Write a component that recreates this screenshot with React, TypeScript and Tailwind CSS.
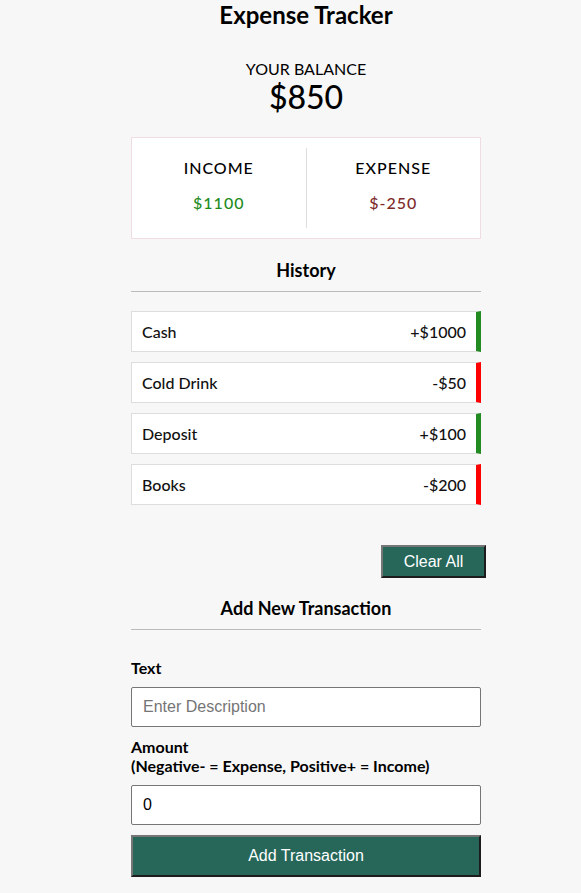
const transactions = [
  { id: 1, text: "Cash", amount: 1000 },
  { id: 2, text: "Cold Drink", amount: -50 },
  { id: 3, text: "Deposit", amount: 100 },
  { id: 4, text: "Books", amount: -200 },
];

function App() {
  const income = 1100;
  const expense = -250;

  return (
    <div className="min-h-[893px] bg-[#f7f7f7] pl-[31px] font-['Lato','Noto_Sans',sans-serif] text-black">
      <div className="w-[350px] mx-auto flex flex-col">
        <h2 className="text-[24px] leading-[30px] font-bold text-center">Expense Tracker</h2>

        {/* balance */}
        <div className="mt-[29px] flex flex-col items-center">
          <h4 className="text-[16px] leading-[19px] uppercase">Your Balance</h4>
          <h1 className="text-[32px] leading-[38px] font-medium">$850</h1>
        </div>

        <div className="mt-[21px] bg-white border border-[#efdde3] py-[10px] flex">
          <div className="flex-1 flex flex-col items-center pt-[10px] pb-[15px] gap-[15px] border-r border-[#dedede]">
            <h4 className="text-[16px] leading-[20px] font-medium tracking-[1px]">INCOME</h4>
            <p className="text-[16px] leading-[20px] font-medium tracking-[1px] text-[#228b22]">${income}</p>
          </div>
          <div className="flex-1 flex flex-col items-center pt-[10px] pb-[15px] gap-[15px]">
            <h4 className="text-[16px] leading-[20px] font-medium tracking-[1px]">EXPENSE</h4>
            <p className="text-[16px] leading-[20px] font-medium tracking-[1px] text-[#7e2a2a]">${expense}</p>
          </div>
        </div>

        <h3 className="mt-[20px] text-[18px] leading-[22px] font-bold text-center pb-[10px] border-b border-[#bbb]">History</h3>
        <ul className="mt-[19px] flex flex-col gap-[10px]">
          {transactions.map((t) => (
            <li
              key={t.id}
              className={
                "bg-white border border-[#dddddd] border-r-[5px] flex justify-between py-[10px] pl-[10px] pr-[10px] text-[16px] leading-[19px] font-medium text-[#111] " +
                (t.amount < 0 ? "border-r-[#ff0000]" : "border-r-[#228b22]")
              }
            >
              <span>{t.text}</span>
              <span>{t.amount < 0 ? "-" : "+"}${Math.abs(t.amount)}</span>
            </li>
          ))}
        </ul>

        <button className="self-end mr-[-5px] mt-[40px] w-[105px] h-[33px] bg-[#26675a] text-white text-[16px] font-['Liberation_Sans',Arial,sans-serif] border-2 border-t-[#767676] border-l-[#767676] border-b-[#1c1c1c] border-r-[#1c1c1c]">
          Clear All
        </button>

        <h3 className="mt-[19px] text-[18px] leading-[22px] font-bold text-center pb-[10px] border-b border-[#bbb]">Add New Transaction</h3>
        <form className="flex flex-col" onSubmit={(e) => e.preventDefault()}>
          <label className="mt-[28px] text-[16px] leading-[19px] font-bold">Text</label>
          <input
            type="text"
            placeholder="Enter Description"
            className="mt-[10px] h-[40px] bg-white border border-[#767676] rounded-[2px] px-[11px] text-[16px] font-['Liberation_Sans',Arial,sans-serif] placeholder:text-[#757575] outline-none"
          />
          <label className="mt-[10px] text-[16px] leading-[19px] font-bold">
            Amount
            <br />
            (Negative- = Expense, Positive+ = Income)
          </label>
          <input
            type="number"
            defaultValue="0"
            className="mt-[10px] h-[40px] bg-white border border-[#767676] rounded-[2px] px-[11px] text-[16px] font-['Liberation_Sans',Arial,sans-serif] outline-none"
          />
          <button className="mt-[10px] h-[42px] bg-[#26675a] text-white text-[16px] font-['Liberation_Sans',Arial,sans-serif] border-2 border-t-[#767676] border-l-[#767676] border-b-[#1c1c1c] border-r-[#1c1c1c]">
            Add Transaction
          </button>
        </form>
      </div>
    </div>
  );
}

export default App;
